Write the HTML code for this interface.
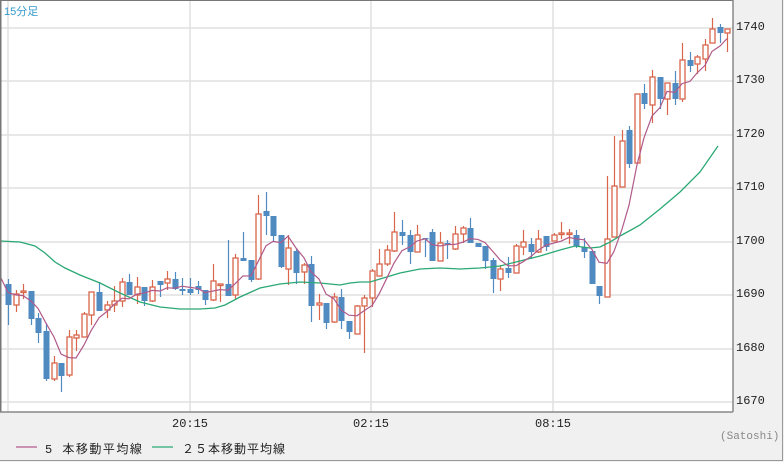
<!DOCTYPE html>
<html><head><meta charset="utf-8"><style>
html,body{margin:0;padding:0;background:#f0f0f0;}
body{width:784px;height:462px;position:relative;overflow:hidden;font-family:"Liberation Sans","Noto Sans CJK JP",sans-serif;}
.frame{position:absolute;left:0;top:0;width:782px;height:460px;border-right:1px solid #999;border-bottom:1px solid #999;}
.lbl{position:absolute;font-size:12px;color:#222;font-family:"Liberation Mono","Noto Sans CJK JP",monospace;}
</style></head><body>
<div class="frame"></div>
<svg id="c" width="784" height="462" style="position:absolute;left:0;top:0">
<rect x="0" y="0" width="733" height="412" fill="#fff"/>
<g stroke="#e0e0e0" stroke-width="1.5">
<line x1="0" y1="28" x2="733" y2="28"/><line x1="0" y1="81" x2="733" y2="81"/>
<line x1="0" y1="135" x2="733" y2="135"/><line x1="0" y1="188" x2="733" y2="188"/>
<line x1="0" y1="242" x2="733" y2="242"/><line x1="0" y1="295" x2="733" y2="295"/>
<line x1="0" y1="349" x2="733" y2="349"/><line x1="0" y1="402" x2="733" y2="402"/>
<line x1="8" y1="0" x2="8" y2="412"/><line x1="190" y1="0" x2="190" y2="412"/>
<line x1="371" y1="0" x2="371" y2="412"/><line x1="553" y1="0" x2="553" y2="412"/>
</g>
<g id="cd"></g>
<polyline fill="none" stroke="#2aa873" stroke-width="1.3" points="0,241 20,242 35,246 45,253 55,262 65,268 80,275 100,283 120,293 140,302 160,307 180,309 200,309 215,308 225,305 240,297 260,288 280,284 300,282 320,283 340,285 350,283 360,282 370,282 380,279 390,276 400,273 420,269 440,268 460,269 480,268 490,267 500,266 520,261 540,256 560,250 575,246 590,248 600,247 610,242 620,236 640,225 660,209 680,192 700,172 718,146"/>
<polyline id="ma5" fill="none" stroke="#b05a8a" stroke-width="1.2" points=""/>
<line x1="0.5" y1="0" x2="0.5" y2="412" stroke="#777" stroke-width="2"/>
<line x1="0" y1="0.5" x2="733" y2="0.5" stroke="#777"/>
<line x1="0" y1="412" x2="733" y2="412" stroke="#888" stroke-width="1.5"/>
<line x1="733" y1="0" x2="733" y2="412" stroke="#888" stroke-width="1.5"/>
<line x1="16" y1="447" x2="37" y2="447" stroke="#b05a8a" stroke-width="1.2"/>
<line x1="152" y1="447" x2="173" y2="447" stroke="#2aa873" stroke-width="1.2"/>
</svg>
<div style="position:absolute;left:4px;top:3px;font-size:11px;color:#3399cc">15分足</div>
<div class="lbl" style="left:736px;top:20px">1740</div>
<div class="lbl" style="left:736px;top:73px">1730</div>
<div class="lbl" style="left:736px;top:127px">1720</div>
<div class="lbl" style="left:736px;top:180px">1710</div>
<div class="lbl" style="left:736px;top:234px">1700</div>
<div class="lbl" style="left:736px;top:287px">1690</div>
<div class="lbl" style="left:736px;top:341px">1680</div>
<div class="lbl" style="left:736px;top:394px">1670</div>
<div class="lbl" style="left:172px;top:417px">20:15</div>
<div class="lbl" style="left:353px;top:417px">02:15</div>
<div class="lbl" style="left:535px;top:417px">08:15</div>
<div class="lbl" style="left:720px;top:431px;font-size:11px;color:#888">(Satoshi)</div>
<div class="lbl" style="left:45px;top:440px;letter-spacing:1.5px">5 本移動平均線</div>
<div class="lbl" style="left:182px;top:440px;letter-spacing:1px">２５本移動平均線</div>
<script>
var d=[[8,0,284,305,279,325],[16,1,294,305,290,312],[23,1,291,292,284,299],[31,0,291,319,291,325],[38,0,318,333,313,343],[46,0,331,379,323,381],[54,1,363,379,356,381],[61,0,363,376,363,392],[69,1,337,375,330,377],[76,1,335,338,330,351],[84,1,314,337,312,337],[91,1,292,315,292,325],[99,0,292,311,282,311],[107,1,305,310,301,318],[114,1,301,305,286,312],[122,1,282,301,278,307],[129,0,282,295,274,295],[137,1,287,295,277,304],[144,0,287,301,287,306],[152,1,287,301,280,302],[160,0,281,285,281,297],[167,1,279,283,271,290],[175,0,279,289,272,290],[182,0,289,291,278,295],[190,0,289,293,278,295],[198,0,286,290,281,294],[205,0,290,300,290,305],[213,1,281,300,264,301],[220,1,284,285,284,302],[228,0,284,296,240,296],[235,1,258,295,254,299],[243,0,258,261,232,261],[251,0,260,280,260,282],[258,1,214,279,195,280],[266,0,211,216,192,235],[273,0,216,236,216,242],[281,0,235,267,235,268],[288,1,248,269,235,285],[296,0,251,273,248,284],[304,1,265,272,263,284],[311,0,264,306,256,322],[319,1,303,305,294,320],[326,0,303,323,303,329],[334,1,297,322,293,323],[341,0,297,321,289,329],[349,0,321,332,321,339],[357,1,306,334,305,334],[364,1,298,306,295,353],[372,1,271,298,269,307],[379,1,264,276,249,276],[387,1,250,264,245,266],[394,1,232,251,212,252],[402,0,232,236,220,245],[410,0,235,252,230,264],[417,1,235,252,225,252],[425,0,238,239,238,257],[432,0,232,261,229,261],[440,1,243,261,232,261],[447,0,243,245,240,259],[455,1,234,249,226,250],[463,1,228,234,226,243],[470,0,228,243,218,243],[478,0,243,247,243,247],[485,0,246,261,246,269],[493,0,260,279,258,293],[500,1,269,279,265,291],[508,0,268,273,257,278],[516,1,246,273,244,273],[523,1,242,247,230,255],[531,0,244,252,238,259],[538,1,239,252,230,253],[546,0,236,247,236,251],[554,1,235,241,233,241],[561,1,233,234,222,239],[569,1,233,234,229,244],[576,0,235,246,230,248],[584,0,247,252,238,258],[592,0,251,284,251,284],[599,0,286,296,286,304],[607,1,239,297,176,297],[614,1,186,237,136,237],[622,1,141,187,130,187],[629,0,130,164,126,168],[637,1,94,163,94,163],[644,0,93,104,84,109],[652,1,77,105,70,123],[660,0,77,99,77,109],[667,1,83,99,83,115],[675,0,83,99,71,105],[682,1,60,99,43,102],[690,0,60,66,52,72],[697,1,57,64,55,74],[705,1,45,59,39,71],[712,1,29,43,18,43],[720,0,27,33,24,43],[727,1,29,33,29,52]];
var g=document.getElementById('cd'),s='',closes=[],pts=[];
var pre=[282,288,292,296];
d.forEach(function(c){
 var x=c[0],up=c[1],col=up?'#d9654a':'#4f8ac0';
 s+='<line x1="'+(x+.5)+'" y1="'+c[4]+'" x2="'+(x+.5)+'" y2="'+c[5]+'" stroke="'+col+'" stroke-width="1.2"/>';
 var h=Math.max(c[3]-c[2],1.5);
 if(up) s+='<rect x="'+(x-2)+'" y="'+c[2]+'" width="5" height="'+h+'" fill="#fff" stroke="'+col+'" stroke-width="1.3"/>';
 else s+='<rect x="'+(x-2.5)+'" y="'+c[2]+'" width="6" height="'+h+'" fill="'+col+'"/>';
 closes.push(up?c[2]:c[3]);
});
g.innerHTML=s;
var all=pre.concat(closes);
pts.push('0,276');
for(var i=0;i<closes.length;i++){var sm=0;for(var k=0;k<5;k++)sm+=all[i+4-k];pts.push(d[i][0]+','+(sm/5).toFixed(1));}
document.getElementById('ma5').setAttribute('points',pts.join(' '));
</script>
</body></html>
